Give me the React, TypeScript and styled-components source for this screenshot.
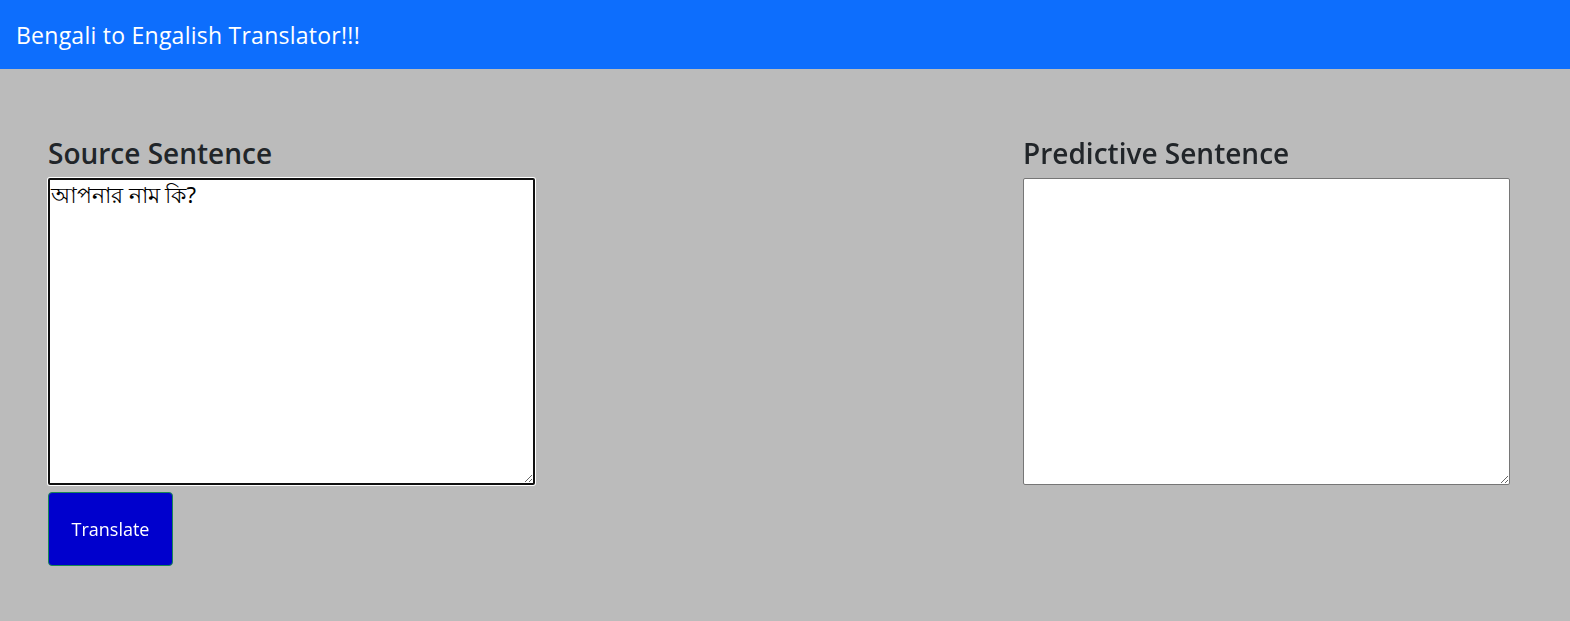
import React from "react";
import styled, { createGlobalStyle } from "styled-components";

const Global = createGlobalStyle`
  html, body { margin: 0; padding: 0; }
  body {
    background: #bbbbbb;
    font-family: "Open Sans", "Noto Sans", sans-serif;
    color: #212529;
  }
  * { box-sizing: border-box; }
`;

const NavBar = styled.nav`
  height: 69px;
  background: #0d6efd;
  display: flex;
  align-items: center;
  padding: 0 16px;
`;

const Brand = styled.span`
  color: #fff;
  font-size: 23px;
  font-family: "Open Sans", sans-serif;
  letter-spacing: 0.25px;
`;

const Main = styled.main`
  display: flex;
  justify-content: space-between;
  padding: 65px 60px 0 48px;
`;

const Column = styled.section`
  display: flex;
  flex-direction: column;
  width: 487px;
  flex: 0 0 487px;
`;

const Heading = styled.h3`
  margin: 0 0 6px;
  font-size: 28px;
  font-weight: 600;
  line-height: 38px;
  color: #212529;
  font-family: "Open Sans", sans-serif;
`;

const TextBox = styled.textarea<{ $focused?: boolean }>`
  width: 487px;
  height: 307px;
  background: #fff;
  border: 1px solid #767676;
  border-radius: 2px;
  padding: 2px;
  font-size: 22px;
  line-height: 1.2;
  font-family: "Noto Sans", "Open Sans", sans-serif;
  color: #000;
  caret-color: #000;
  resize: both;
  outline: none;
  ${(p) =>
    p.$focused &&
    `
    border: 2px solid #101010;
    padding: 1px;
    box-shadow: 0 0 0 1px #fff;
  `}
`;

const Button = styled.button`
  margin-top: 7px;
  width: 125px;
  height: 74px;
  background: #0000cd;
  border: 1px solid #198754;
  border-radius: 4px;
  color: #fff;
  font-size: 18px;
  font-family: "Open Sans", sans-serif;
  cursor: pointer;
`;

export default function App() {
  return (
    <>
      <Global />
      <NavBar>
        <Brand>Bengali to Engalish Translator!!!</Brand>
      </NavBar>
      <Main>
        <Column>
          <Heading>Source Sentence</Heading>
          <TextBox $focused autoFocus defaultValue="আপনার নাম কি?" />
          <div>
            <Button>Translate</Button>
          </div>
        </Column>
        <Column>
          <Heading>Predictive Sentence</Heading>
          <TextBox defaultValue="" />
        </Column>
      </Main>
    </>
  );
}
